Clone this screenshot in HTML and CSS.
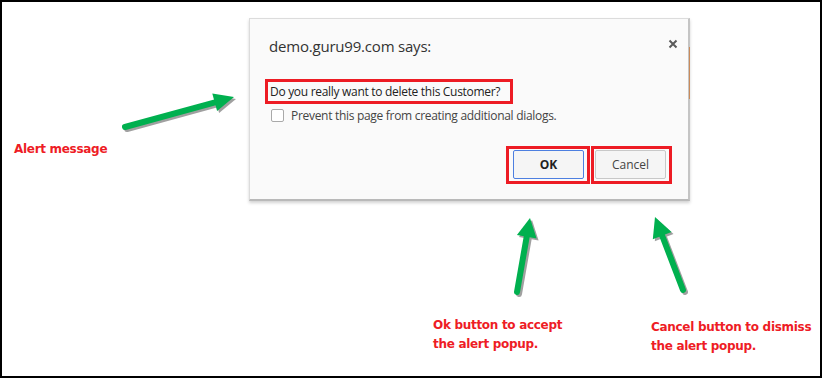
FILE: index.html
```html
<!DOCTYPE html>
<html lang="en">
<head>
    <meta charset="UTF-8">
    <title>Alert popup</title>
    <link rel="stylesheet" href="styles.css">
</head>
<body>
    <div class="frame">
        <div class="dialog">
            <div class="dialogHead">
                <span class="dialogTitle">demo.guru99.com says:</span>
                <svg class="closeIcon" width="10" height="10" viewBox="0 0 10 10">
                    <path d="M1.5 1.5 L8.5 8.5 M8.5 1.5 L1.5 8.5" stroke="#5a5a5a" stroke-width="2" fill="none"/>
                </svg>
            </div>
            <div class="dialogMsg">
                <span class="mark">Do you really want to delete this Customer?</span>
            </div>
            <label class="dialogCheck">
                <span class="checkBox"></span>
                Prevent this page from creating additional dialogs.
            </label>
            <div class="dialogBtns">
                <span class="mark btnMark"><span class="btn btnOk">OK</span></span>
                <span class="mark btnMark"><span class="btn">Cancel</span></span>
            </div>
            <span class="edgeLine"></span>
        </div>

        <!-- annotations -->
        <svg class="arrows" width="822" height="379" viewBox="0 0 822 379">
            <g class="shadow" transform="translate(2,2)">
                <line x1="125" y1="127" x2="215" y2="102.3"/>
                <polygon points="234,97 217.1,111 212.3,93.6"/>
                <line x1="517" y1="292" x2="526.7" y2="236.7"/>
                <polygon points="530,218 536.6,238.4 516.9,235"/>
                <line x1="683" y1="290" x2="662.2" y2="235.7"/>
                <polygon points="655,217 671.5,232.1 652.8,239.3"/>
            </g>
            <g class="green">
                <line x1="125" y1="127" x2="215" y2="102.3"/>
                <polygon points="234,97 217.1,111 212.3,93.6"/>
                <line x1="517" y1="292" x2="526.7" y2="236.7"/>
                <polygon points="530,218 536.6,238.4 516.9,235"/>
                <line x1="683" y1="290" x2="662.2" y2="235.7"/>
                <polygon points="655,217 671.5,232.1 652.8,239.3"/>
            </g>
        </svg>
        <div class="note noteAlert">Alert message</div>
        <div class="note noteOk">Ok button to accept<br>the alert popup.</div>
        <div class="note noteCancel">Cancel button to dismiss<br>the alert popup.</div>
    </div>
</body>
</html>
```

FILE: styles.css
```css
* {
    padding: 0;
    margin: 0;
    box-sizing: border-box;
}

body {
    background-color: #fff;
    font-family: "Open Sans", "Noto Sans", sans-serif;
}

.frame {
    position: relative;
    width: 822px;
    height: 378px;
    border: 2px solid #000;
    padding: 16px 0 0 247px;
}

.dialog {
    position: relative;
    width: 441px;
    height: 183px;
    padding: 0 16px 0 15px;
    background-color: #fafafa;
    border: 1px solid #dcdcdc;
    border-bottom: 2px solid #b9b9b9;
    border-right: 2px solid #c4c4c4;
    box-shadow: 0 2px 3px rgba(0, 0, 0, 0.18);
}

.dialog .dialogHead {
    display: flex;
    justify-content: space-between;
    align-items: flex-start;
    height: 60px;
    padding: 17px 0 0 4px;
}

.dialog .dialogTitle {
    font-size: 15px;
    line-height: 20px;
    color: #333;
    letter-spacing: -0.2px;
}

.dialog .closeIcon {
    margin: 3px -6px 0 0;
}

.dialog .mark {
    display: inline-block;
    border: 3px solid #ed1c24;
}

.dialog .dialogMsg .mark {
    height: 25px;
    padding: 0 10px 0 2px;
    font-size: 12px;
    line-height: 19px;
    color: #222;
    letter-spacing: -0.3px;
}

.dialog .dialogCheck {
    display: flex;
    align-items: center;
    height: 19px;
    margin: 2px 0 0 6px;
    font-size: 12px;
    color: #444;
    letter-spacing: -0.3px;
}

.dialog .checkBox {
    width: 13px;
    height: 13px;
    margin-right: 7px;
    border: 1px solid #a9a9a9;
    border-radius: 2px;
    background-color: #fff;
}

.dialog .dialogBtns {
    display: flex;
    justify-content: flex-end;
    gap: 1px;
    margin-top: 21px;
}

.dialog .btnMark {
    height: 38px;
    padding: 1px 3px 0 4px;
}

.dialog .btnMark + .btnMark {
    padding: 1px 3px 0 1px;
}

.dialog .btn {
    display: block;
    width: 71px;
    height: 29px;
    line-height: 27px;
    text-align: center;
    font-size: 12px;
    color: #444;
    background-color: #f5f5f5;
    border: 1px solid #c8c8c8;
    border-radius: 2px;
}

.dialog .btnOk {
    font-weight: bold;
    color: #222;
    border-color: #4d7fe0;
}

.dialog .edgeLine {
    position: absolute;
    right: -2px;
    top: 28px;
    width: 1px;
    height: 52px;
    background-color: #c98a5a;
}

.arrows {
    position: absolute;
    left: -2px;
    top: -2px;
    pointer-events: none;
}

.arrows line {
    stroke-width: 6;
    stroke-linecap: round;
}

.arrows .shadow line {
    stroke: #a0a0a0;
}

.arrows .shadow polygon {
    fill: #a0a0a0;
}

.arrows .green line {
    stroke: #00b04f;
}

.arrows .green polygon {
    fill: #00b04f;
}

.note {
    position: absolute;
    font-family: "DejaVu Sans", sans-serif;
    font-weight: bold;
    font-size: 12px;
    line-height: 19px;
    color: #ee1c25;
    letter-spacing: -0.3px;
}

.noteAlert {
    left: 12px;
    top: 138px;
}

.noteOk {
    left: 431px;
    top: 314px;
}

.noteCancel {
    left: 649px;
    top: 316px;
}
```
